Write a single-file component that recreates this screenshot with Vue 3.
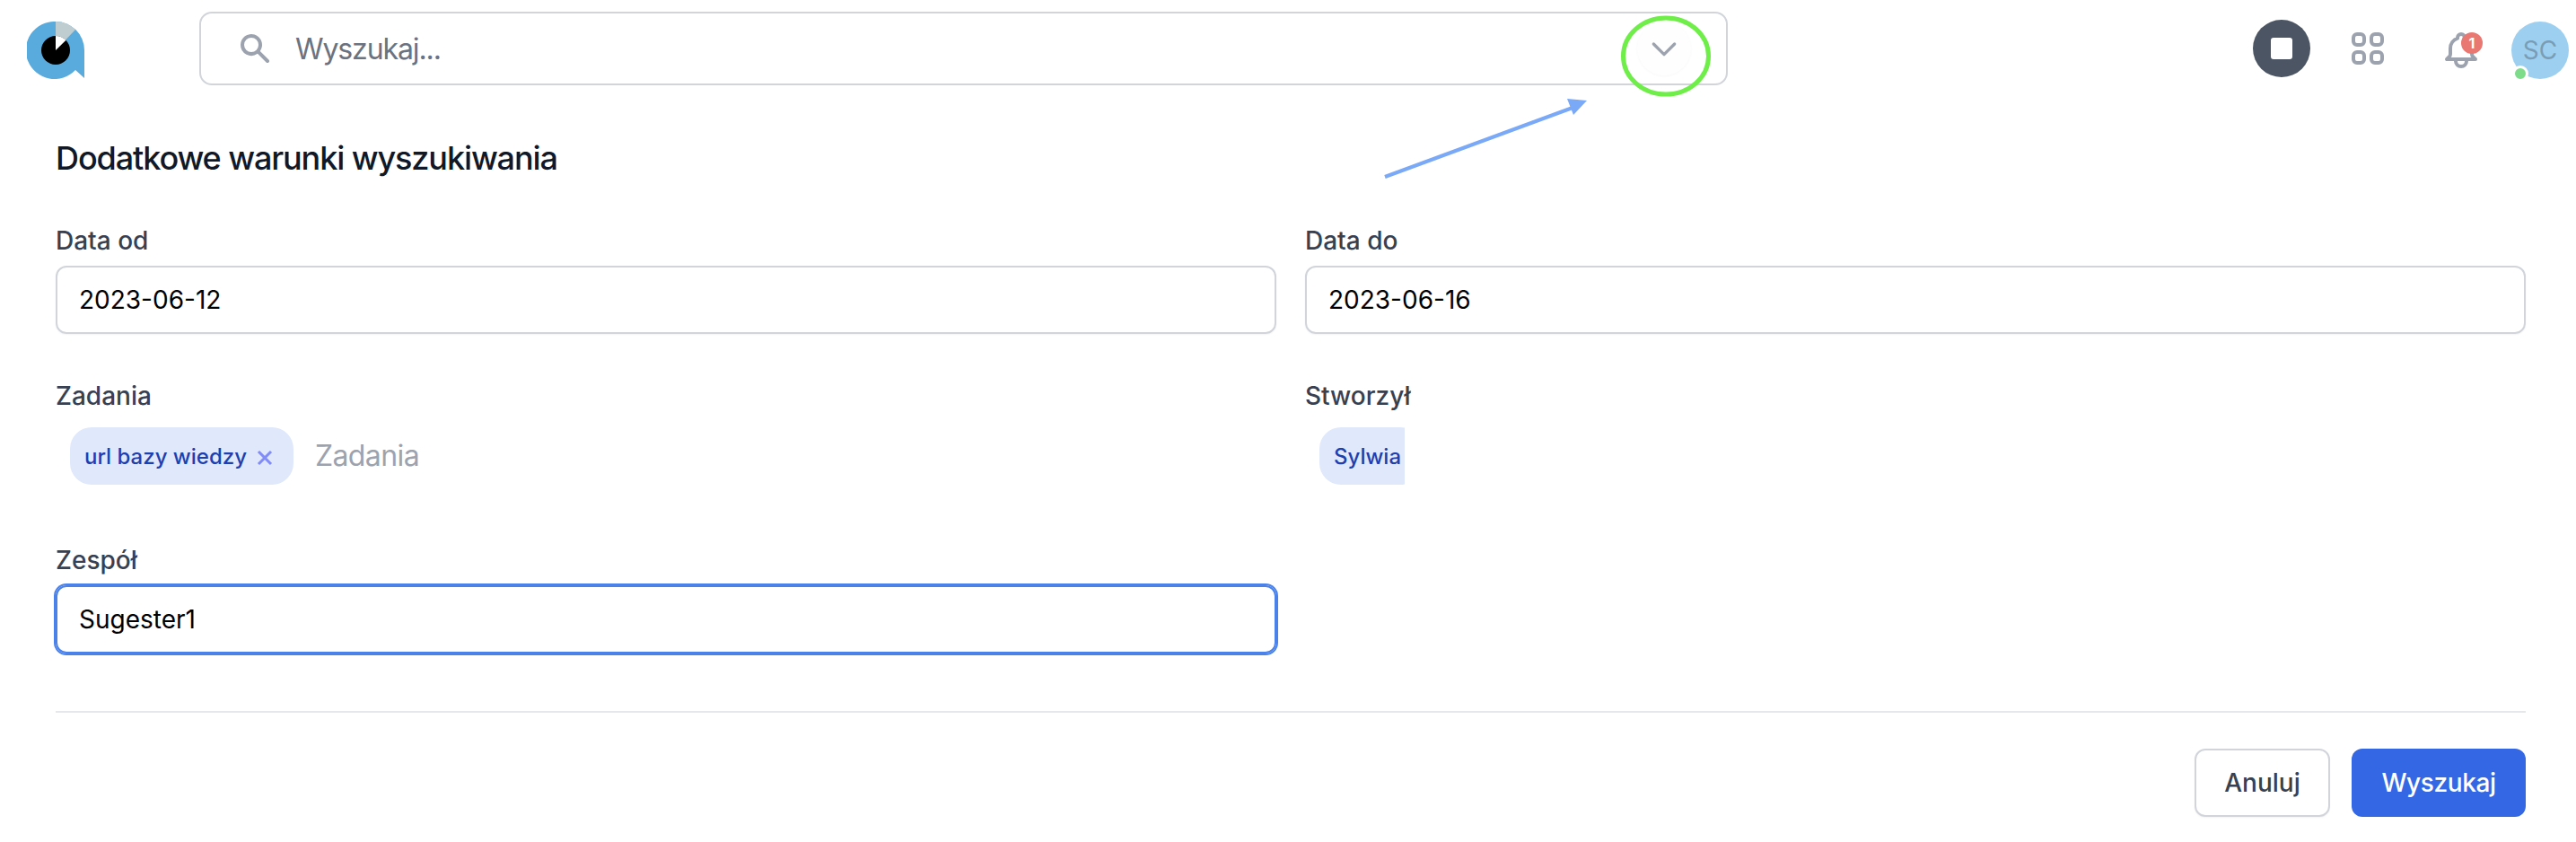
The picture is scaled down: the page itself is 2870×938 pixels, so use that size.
<script setup>
const row1 = [
  { label: 'Data od', value: '2023-06-12' },
  { label: 'Data do', value: '2023-06-16' },
]
</script>

<template>
  <div class="page">
    <header class="top">
      <svg class="logo" width="64" height="64" viewBox="0 0 64 64">
        <path d="M32 0a32 32 0 0 1 32 32v31L54 54A32 32 0 1 1 32 0z" fill="#5aabdd" />
        <path d="M32 0a32 32 0 0 1 22 9L32 32z" fill="#bfcdd0" />
        <circle cx="32" cy="32" r="16" fill="#000" />
        <path d="M32 16a16 16 0 0 1 11.500 4.800L32 32z" fill="#fff" />
      </svg>

      <div class="search">
        <svg class="search-icon" width="40" height="40" viewBox="0 0 20 20" fill="#9ca3af">
          <path fill-rule="evenodd" clip-rule="evenodd" d="M8 4a4 4 0 100 8 4 4 0 000-8zM2 8a6 6 0 1110.89 3.476l4.817 4.817a1 1 0 01-1.414 1.414l-4.816-4.816A6 6 0 012 8z" />
        </svg>
        <span class="search-text">Wyszukaj...</span>
        <span class="chevron-btn">
          <svg width="40" height="40" viewBox="0 0 24 24" fill="none" stroke="#9ca3af" stroke-width="2" stroke-linecap="round" stroke-linejoin="round">
            <path d="M19 9l-7 7-7-7" />
          </svg>
        </span>
      </div>

      <div class="actions">
        <span class="stop"><span class="stop-square"></span></span>
        <svg class="grid-icon" width="36" height="36" viewBox="0 0 36 36" fill="none" stroke="#9ca3af" stroke-width="4">
          <rect x="2" y="2" width="12" height="12" rx="4" />
          <rect x="22" y="2" width="12" height="12" rx="4" />
          <rect x="2" y="22" width="12" height="12" rx="4" />
          <rect x="22" y="22" width="12" height="12" rx="4" />
        </svg>
        <span class="bell">
          <svg width="48" height="48" viewBox="0 0 24 24" fill="none" stroke="#9ca3af" stroke-width="2" stroke-linecap="round" stroke-linejoin="round">
            <path d="M15 17h5l-1.405-1.405A2.032 2.032 0 0118 14.158V11a6.002 6.002 0 00-4-5.659V5a2 2 0 10-4 0v.341C7.67 6.165 6 8.388 6 11v3.159c0 .538-.214 1.055-.595 1.436L4 17h5m6 0v1a3 3 0 11-6 0v-1m6 0H9" />
          </svg>
          <span class="badge">1</span>
        </span>
        <span class="avatar">SC<span class="online"></span></span>
      </div>
    </header>

    <main class="panel">
      <h1 class="title">Dodatkowe warunki wyszukiwania</h1>

      <div class="grid">
        <div v-for="f in row1" :key="f.label" class="field">
          <label class="label">{{ f.label }}</label>
          <div class="input">{{ f.value }}</div>
        </div>

        <div class="field">
          <label class="label">Zadania</label>
          <div class="multi">
            <span class="chip">
              url bazy wiedzy
              <svg class="chip-x" width="18" height="18" viewBox="0 0 18 18" stroke="#818cf8" stroke-width="3" fill="none">
                <path d="M2 2l14 14M16 2L2 16" />
              </svg>
            </span>
            <span class="placeholder">Zadania</span>
          </div>
        </div>

        <div class="field">
          <label class="label">Stworzył</label>
          <div class="multi">
            <span class="chip-clip"><span class="chip">Sylwia</span></span>
          </div>
        </div>

        <div class="field">
          <label class="label">Zespół</label>
          <div class="input focus">Sugester1</div>
        </div>
      </div>

      <div class="footer">
        <button class="btn ghost">Anuluj</button>
        <button class="btn primary">Wyszukaj</button>
      </div>
    </main>

    <svg class="annotation" width="2870" height="938" viewBox="0 0 2870 938" fill="none">
      <ellipse cx="1856" cy="62.500" rx="47.500" ry="42.500" stroke="#6fee4a" stroke-width="5" />
      <path d="M1543 197L1752 120" stroke="#7aa9f7" stroke-width="4" />
      <path d="M1768 112L1746 110L1753 128Z" fill="#7aa9f7" />
    </svg>
  </div>
</template>

<style>
html, body { margin: 0; background: #fff; }
</style>

<style scoped>
.page {
  position: relative;
  width: 2870px;
  height: 938px;
  overflow: hidden;
  background: #fff;
  font-family: Inter, "Liberation Sans", sans-serif;
  color: #111827;
}
.top {
  display: flex;
  align-items: center;
  height: 108px;
  padding: 0 8px 0 30px;
  box-sizing: border-box;
}
.logo { flex: none; margin: 4px 128px 0 0; }
.search {
  flex: none;
  display: flex;
  align-items: center;
  box-sizing: border-box;
  width: 1703px;
  height: 82px;
  padding: 0 39px 0 40px;
  border: 2px solid #d1d5db;
  border-radius: 14px;
}
.search-text { margin-left: 25px; font-size: 32px; letter-spacing: -1.1px; color: #6b7280; }
.chevron-btn {
  margin-left: auto;
  width: 60px;
  height: 60px;
  border-radius: 50%;
  display: flex;
  align-items: center;
  justify-content: center;
  background: #fefefe;
  box-shadow: 0 1px 3px rgba(0, 0, 0, 0.03);
}
.actions { margin-left: auto; display: flex; align-items: center; }
.stop {
  width: 64px;
  height: 64px;
  border-radius: 50%;
  background: #4b5563;
  display: flex;
  align-items: center;
  justify-content: center;
}
.stop-square { width: 24px; height: 24px; border-radius: 3px; background: #fff; }
.grid-icon { margin-left: 46px; }
.bell { position: relative; display: block; width: 48px; height: 48px; margin: 4px 0 0 62px; }
.bell svg { display: block; }
.badge {
  position: absolute;
  left: 24px;
  top: 4px;
  width: 24px;
  height: 24px;
  border-radius: 50%;
  background: #e97872;
  color: #fff;
  font-size: 16px;
  font-weight: 700;
  line-height: 24px;
  text-align: center;
}
.avatar {
  position: relative;
  width: 64px;
  height: 64px;
  margin: 4px 0 0 32px;
  border-radius: 50%;
  background: #9dd0f0;
  color: #7a9db5;
  font-size: 28px;
  line-height: 64px;
  text-align: center;
}
.online {
  position: absolute;
  left: 1px;
  bottom: -3px;
  width: 12px;
  height: 12px;
  border-radius: 50%;
  background: #7ddc8a;
  border: 3px solid #fff;
}
.panel { padding: 0 56px 0 62px; }
.title {
  margin: 46px 0 0;
  font-size: 36px;
  line-height: 44px;
  font-weight: 500;
  letter-spacing: -1.1px;
  color: #111827;
}
.grid {
  display: grid;
  grid-template-columns: 1360px 1360px;
  column-gap: 32px;
  row-gap: 48px;
  margin-top: 49px;
}
.field { display: flex; flex-direction: column; }
.label {
  font-size: 28px;
  line-height: 42px;
  font-weight: 500;
  color: #374151;
  margin-bottom: 7px;
}
.input {
  box-sizing: border-box;
  height: 76px;
  padding: 0 24px;
  border: 2px solid #d1d5db;
  border-radius: 12px;
  font-size: 28px;
  line-height: 72px;
  color: #000;
  box-shadow: 0 1px 2px rgba(0, 0, 0, 0.05);
}
.input.focus {
  border-color: #4b82ea;
  box-shadow: 0 0 0 2px #4b82ea;
}
.multi {
  display: flex;
  align-items: flex-start;
  box-sizing: border-box;
  height: 86px;
  padding: 7px 0 0 16px;
}
.chip {
  display: inline-flex;
  align-items: center;
  height: 64px;
  padding: 0 23px 0 16px;
  border-radius: 24px;
  background: #dfe9fb;
  color: #1e40af;
  font-size: 24px;
  font-weight: 500;
  white-space: nowrap;
  box-sizing: border-box;
}
.chip-x { margin: 4px 0 0 11px; }
.chip-clip { display: block; width: 95px; height: 64px; overflow: hidden; }
.placeholder { margin-left: 24px; font-size: 32px; line-height: 64px; letter-spacing: -0.6px; color: #9ca3af; }
.footer {
  display: flex;
  justify-content: flex-end;
  gap: 24px;
  margin-top: 64px;
  padding-top: 40px;
  border-top: 2px solid #e5e7eb;
}
.btn {
  box-sizing: border-box;
  height: 76px;
  border-radius: 12px;
  font-family: inherit;
  font-size: 28px;
  font-weight: 500;
}
.ghost {
  width: 151px;
  background: #fff;
  border: 2px solid #d1d5db;
  color: #374151;
  box-shadow: 0 1px 2px rgba(0, 0, 0, 0.05);
}
.primary {
  width: 194px;
  background: #3367e4;
  border: 0;
  color: #fff;
  letter-spacing: -0.4px;
}
.annotation { position: absolute; left: 0; top: 0; pointer-events: none; }
</style>
